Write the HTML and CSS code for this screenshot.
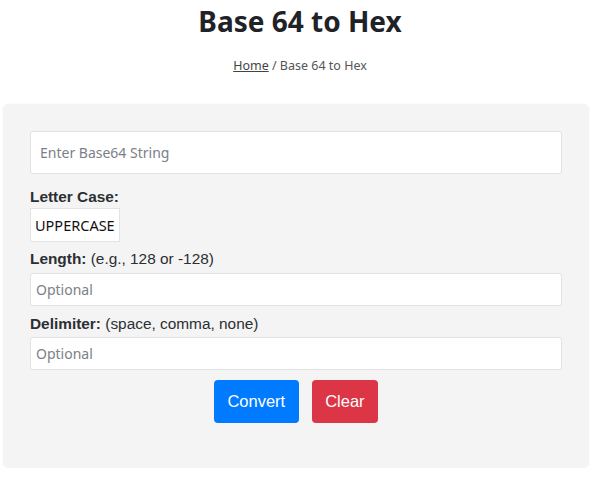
FILE: index.html
```html
<!DOCTYPE html>
<html lang="en">
<head>
<meta charset="utf-8">
<title>Base 64 to Hex</title>
<link rel="stylesheet" href="styles.css">
</head>
<body>
<header class="head">
  <h1 class="title">Base 64 to Hex</h1>
  <nav class="crumbs"><a href="#" class="crumb-link">Home</a> / Base 64 to Hex</nav>
</header>
<main class="card">
  <input class="field field-main" type="text" placeholder="Enter Base64 String">
  <label class="lbl lbl-case"><b>Letter Case:</b></label>
  <div class="select">UPPERCASE</div>
  <label class="lbl lbl-len"><b>Length:</b> (e.g., 128 or -128)</label>
  <input class="field" type="text" placeholder="Optional">
  <label class="lbl lbl-delim"><b>Delimiter:</b> (space, comma, none)</label>
  <input class="field" type="text" placeholder="Optional">
  <div class="actions">
    <button class="btn btn-blue">Convert</button>
    <button class="btn btn-red">Clear</button>
  </div>
</main>
</body>
</html>
```
FILE: styles.css
```css
html, body {
  margin: 0;
  padding: 0;
  background: #fff;
}
body {
  font-family: "Noto Sans", "Open Sans", sans-serif;
  color: #212529;
}
.head {
  text-align: center;
  padding-top: 3px;
}
.title {
  margin: 0;
  font-size: 28px;
  font-weight: 700;
  line-height: 36px;
  color: #1f2328;
}
.crumbs {
  margin-top: 18px;
  font-size: 12.5px;
  line-height: 18px;
  color: #555;
}
.crumb-link {
  color: #444;
  text-decoration: underline;
}
.card {
  box-sizing: border-box;
  width: 586px;
  margin: 29px 0 0 3px;
  background: #f4f4f4;
  border-radius: 6px;
  padding: 27px 27px 45px;
  display: flex;
  flex-direction: column;
  align-items: flex-start;
  box-shadow: 0 0 2px rgba(0,0,0,0.05);
}
.field {
  box-sizing: border-box;
  width: 100%;
  height: 33px;
  margin-top: 4px;
  border: 1px solid #e2e2e2;
  border-radius: 3px;
  background: #fff;
  padding: 0 5px;
  font-family: "Noto Sans", "Open Sans", sans-serif;
  font-size: 14px;
  color: #333;
  outline: none;
}
.field::placeholder {
  color: #7b8088;
}
.field-main {
  height: 43px;
  margin-top: 0;
  padding: 0 9px;
}
.lbl {
  font-family: "Liberation Sans", Arial, sans-serif;
  font-size: 15.4px;
  line-height: 20px;
  color: #2b2f33;
}
.lbl b {
  font-weight: 700;
}
.lbl-case { margin-top: 13px; }
.lbl-len { margin-top: 7px; }
.lbl-delim { margin-top: 8px; }
.lbl-delim + .field { margin-top: 3px; }
.select {
  box-sizing: border-box;
  height: 34px;
  line-height: 32px;
  margin-top: 1px;
  padding: 0 4px;
  border: 1px solid #e4e4e4;
  background: #fff;
  font-size: 14.5px;
  color: #111;
}
.actions {
  align-self: stretch;
  display: flex;
  justify-content: center;
  gap: 13px;
  margin-top: 10px;
}
.btn {
  height: 43px;
  border: none;
  border-radius: 4px;
  padding: 0 13.5px;
  font-family: "Liberation Sans", Arial, sans-serif;
  font-size: 16.5px;
  color: #fff;
  cursor: pointer;
}
.btn-blue { background: #007bff; }
.btn-red { background: #dc3545; }
```
